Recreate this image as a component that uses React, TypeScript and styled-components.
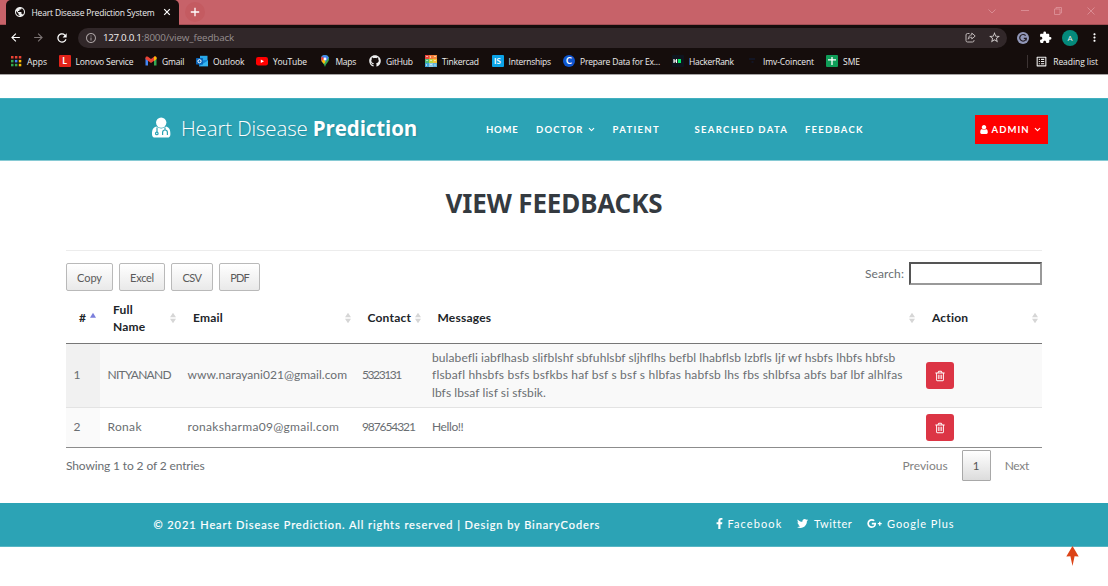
import React from 'react';
import styled, { createGlobalStyle } from 'styled-components';
import { MdPublic, MdInfoOutline, MdStarBorder, MdExtension, MdMoreVert, MdRefresh, MdArrowBack, MdArrowForward, MdOutlineListAlt } from 'react-icons/md';
import { FaGithub, FaFacebookF, FaTwitter, FaGooglePlusG } from 'react-icons/fa';
import { ChevronDown } from 'lucide-react';

const teal = '#2ca3b5';
const uiFont = '"Open Sans", "Noto Sans", sans-serif';
const bodyFont = 'Lato, "Open Sans", sans-serif';

const GlobalStyle = createGlobalStyle`
  * { box-sizing: border-box; }
  body { margin: 0; background: #fff; font-family: ${bodyFont}; overflow: hidden; }
  svg { display: block; flex: none; }
`;

/* letter-spaced run of text */
const Run = styled.span<{ $ls?: number }>`
  letter-spacing: ${(p) => p.$ls ?? 0}px;
  white-space: nowrap;
`;

/* ---------- browser window ---------- */
const Browser = styled.div`
  height: 75px;
  background: #150d0c;
  border-bottom: 1px solid #a5a3a3;
  font-family: ${uiFont};
  color: #eee;
`;
const TabStrip = styled.div`
  display: flex;
  height: 25px;
  padding-left: 6px;
  background: #c76269;
  border-bottom: 1px solid #a34e54;
`;
const Tab = styled.div`
  display: flex;
  align-items: center;
  width: 173px;
  height: 25px;
  padding: 0 8px 1px 8px;
  border-radius: 5px 5px 0 0;
  background: #150d0c;
  font-size: 8.5px;
  color: #eee;
`;
const TabTitle = styled.span`
  flex: 1;
  margin-left: 5.5px;
  letter-spacing: -0.18px;
  white-space: nowrap;
`;
const NewTab = styled.div`
  display: flex;
  align-items: center;
  justify-content: center;
  width: 20px;
  height: 20px;
  margin: 2px 0 0 6px;
  border-radius: 50%;
  background: #c45b61;
`;
const WindowControls = styled.div`
  display: flex;
  gap: 23px;
  margin: 6px 12px 0 auto;
`;
const AddressRow = styled.div`
  display: flex;
  align-items: center;
  height: 26px;
  padding: 0 10px 1px 9px;
`;
const NavButtons = styled.div`
  display: flex;
  flex: none;
  align-items: center;
  gap: 10px;
  width: 69px;
`;
const Address = styled.div`
  display: flex;
  flex: none;
  align-items: center;
  width: 929px;
  height: 20px;
  padding: 0 6px 0 7px;
  border-radius: 10px;
  background: #312729;
  font-size: 9.8px;
`;
const Host = styled.span`
  margin-left: 6px;
  letter-spacing: -0.32px;
  color: #f1eeee;
`;
const Path = styled.span`
  flex: 1;
  letter-spacing: -0.12px;
  color: #968f90;
`;
const AddressActions = styled.div`
  display: flex;
  align-items: center;
  gap: 12px;
  color: #cfcaca;
`;
const Extensions = styled.div`
  display: flex;
  align-items: center;
  gap: 10px;
  margin-left: 10px;
`;
const Avatar = styled.div`
  width: 16px;
  height: 16px;
  border-radius: 50%;
  background: #04897b;
  font-size: 8px;
  line-height: 16px;
  text-align: center;
`;
const Bookmarks = styled.div`
  display: flex;
  align-items: center;
  height: 20px;
  padding: 0 10px 0 10px;
  font-size: 8.5px;
  white-space: nowrap;
`;
const Bookmark = styled.div<{ $width: number; $ls: number }>`
  display: flex;
  flex: none;
  align-items: center;
  gap: 5px;
  width: ${(p) => p.$width}px;
  letter-spacing: ${(p) => p.$ls}px;
`;
const ReadingList = styled.div`
  display: flex;
  align-items: center;
  gap: 5px;
  margin-left: auto;
  padding-left: 7px;
  border-left: 1px solid #3d3434;
  letter-spacing: -0.06px;
`;

/* ---------- page header ---------- */
const Header = styled.header`
  display: flex;
  align-items: center;
  height: 63px;
  margin-top: 23px;
  padding-left: 151px;
  border-top: 1px solid #40b0bf;
  border-bottom: 1px solid #86cad4;
  background: ${teal};
  color: #fff;
`;
const Brand = styled.div`
  display: flex;
  flex: none;
  align-items: center;
  gap: 10px;
  width: 335px;
  padding-bottom: 3px;
  font: 300 20.5px/28px ${uiFont};
  letter-spacing: -0.15px;
  text-shadow: 1px 1px 2px rgba(0, 0, 0, 0.16);
  white-space: pre;
  b { font-weight: 700; letter-spacing: -0.1px; }
`;
const NavItem = styled.a<{ $width: number; $ls: number }>`
  display: flex;
  align-items: center;
  gap: 3px;
  flex: none;
  width: ${(p) => p.$width}px;
  font-size: 9.5px;
  font-weight: 700;
  letter-spacing: ${(p) => p.$ls}px;
  white-space: nowrap;
`;
const AdminButton = styled.div`
  display: flex;
  align-items: center;
  width: 73px;
  height: 29px;
  margin-left: -0.5px;
  padding: 0 6px 0 5px;
  background: #f00;
  font-size: 9.5px;
  font-weight: 700;
  letter-spacing: 1.05px;
  span { margin: 0 3px 0 4px; }
`;

/* ---------- content ---------- */
const Content = styled.main`
  width: 976px;
  height: 342px;
  margin: 0 66px;
  color: #6a6e72;
`;
const Title = styled.h1`
  height: 90px;
  margin: 0;
  padding-top: 23px;
  border-bottom: 1px solid #ececec;
  font: 700 26px/38px "Noto Sans", sans-serif;
  letter-spacing: -0.14px;
  text-align: center;
  color: #343a40;
`;
const Tools = styled.div`
  display: flex;
  align-items: flex-start;
  gap: 6px;
  height: 40px;
  padding-top: 12px;
`;
const ToolButton = styled.button<{ $width: number; $ls: number }>`
  width: ${(p) => p.$width}px;
  height: 28px;
  padding: 0;
  border: 1px solid #b9b9b9;
  border-radius: 2px;
  background: linear-gradient(#fff, #e9e9e9);
  font: 11px ${bodyFont};
  letter-spacing: ${(p) => p.$ls}px;
  color: #5a5a5a;
`;
const Search = styled.label`
  display: flex;
  align-items: center;
  gap: 5px;
  margin: -1px 0 0 auto;
  font-size: 12px;
  letter-spacing: 0.1px;
`;
const SearchInput = styled.input`
  width: 133px;
  height: 23px;
  border: 2px solid;
  border-color: #555 #999 #999 #555;
  background: #fff;
`;
const Table = styled.table`
  width: 976px;
  table-layout: fixed;
  border-collapse: separate;
  border-spacing: 0;
  border-bottom: 1px solid #8c8c8c;
  font-size: 12px;
  line-height: 17.3px;
`;
const HeadCell = styled.th<{ $width: number }>`
  width: ${(p) => p.$width}px;
  height: 53px;
  padding: 2px 4px 0 13px;
  border-bottom: 1px solid #777;
  text-align: left;
  color: #212529;
  font-weight: 700;
  letter-spacing: 0.2px;
`;
const HeadInner = styled.div`
  display: flex;
  align-items: center;
  justify-content: space-between;
`;
const Row = styled.tr<{ $odd?: boolean; $height: number }>`
  height: ${(p) => p.$height}px;
  background: ${(p) => (p.$odd ? '#f9f9f9' : '#fff')};
  td:first-child { background: ${(p) => (p.$odd ? '#f1f1f1' : '#fafafa')}; }
  td { border-bottom: ${(p) => (p.$odd ? '1px solid #e3e3e3' : '0')}; }
`;
const Cell = styled.td`
  padding: 0 0 1px 7.5px;
  vertical-align: middle;
`;
const ActionCell = styled(Cell)`
  padding: 0 0 0 7px;
`;
const Line = styled.div<{ $ls: number }>`
  letter-spacing: ${(p) => p.$ls}px;
  white-space: nowrap;
`;
const DeleteButton = styled.button`
  display: flex;
  align-items: center;
  justify-content: center;
  width: 28px;
  height: 27px;
  padding: 0;
  border: 0;
  border-radius: 3px;
  background: #dc3545;
`;
const TableFooter = styled.div`
  display: flex;
  align-items: center;
  height: 35px;
  padding-right: 13px;
  font-size: 12px;
`;
const Pager = styled.div`
  display: flex;
  align-items: center;
  gap: 14px;
  margin-left: auto;
  color: #828282;
`;
const PageNumber = styled.div`
  width: 29px;
  height: 31px;
  border: 1px solid #a8a8a8;
  border-radius: 1px;
  background: linear-gradient(#fff, #dcdcdc);
  font-size: 11.5px;
  line-height: 29px;
  text-align: center;
  color: #555;
`;

/* ---------- footer ---------- */
const Footer = styled.footer`
  display: flex;
  align-items: center;
  height: 44px;
  padding: 0 0 2px 153.5px;
  border-bottom: 1px solid #58b6c4;
  background: ${teal};
  color: #fff;
  font-size: 11px;
`;
const Copyright = styled.div`
  width: 560.5px;
  padding-top: 2px;
  letter-spacing: 0.92px;
  -webkit-text-stroke: 0.2px #fff;
`;
const Social = styled.a<{ $width: number; $ls: number; $gap: number }>`
  display: flex;
  align-items: center;
  gap: ${(p) => p.$gap}px;
  width: ${(p) => p.$width}px;
  letter-spacing: ${(p) => p.$ls}px;
  white-space: nowrap;
`;
const ToTop = styled.div`
  display: flex;
  justify-content: flex-end;
  margin-top: -1px;
  padding-right: 29px;
`;

/* ---------- drawings ---------- */
const SortIcon = ({ asc }: { asc?: boolean }) => (
  <svg width="6" height="12" viewBox="0 0 6 12">
    {asc ? <path d="M3 0.8 6 5.8H0z" fill="#7b7fdc" /> : <path d="M3 0.8 6 5.2H0zM0 6.8h6L3 11.2z" fill="#d6d6d6" />}
  </svg>
);
const TrashIcon = () => (
  <svg width="12" height="12" viewBox="0 0 1792 1792" fill="#fff">
    <path d="M704 736v576q0 14-9 23t-23 9h-64q-14 0-23-9t-9-23v-576q0-14 9-23t23-9h64q14 0 23 9t9 23zm256 0v576q0 14-9 23t-23 9h-64q-14 0-23-9t-9-23v-576q0-14 9-23t23-9h64q14 0 23 9t9 23zm256 0v576q0 14-9 23t-23 9h-64q-14 0-23-9t-9-23v-576q0-14 9-23t23-9h64q14 0 23 9t9 23zm128 724v-948h-896v948q0 22 7 40.5t14.5 27 10.5 8.5h832q3 0 10.5-8.5t14.5-27 7-40.5zm-672-1076h448l-48-117q-7-9-17-11h-317q-10 2-17 11zm928 32v64q0 14-9 23t-23 9h-96v948q0 83-47 143.5t-113 60.5h-832q-66 0-113-58.5t-47-141.5v-952h-96q-14 0-23-9t-9-23v-64q0-14 9-23t23-9h309l70-167q15-37 54-63t79-26h320q40 0 79 26t54 63l70 167h309q14 0 23 9t9 23z" />
  </svg>
);
const UserIcon = () => (
  <svg width="8" height="9" viewBox="256 128 1280 1536" fill="#fff">
    <path d="M1536 1399q0 109-62.5 187t-150.5 78h-854q-88 0-150.5-78t-62.5-187q0-85 8.5-160.5t31.5-152 58.5-131 94-89 134.5-34.5q131 128 313 128t313-128q76 0 134.5 34.5t94 89 58.5 131 31.5 152 8.5 160.5zm-256-887q0 159-112.5 271.5t-271.5 112.5-271.5-112.5-112.5-271.5 112.5-271.5 271.5-112.5 271.5 112.5 112.5 271.5z" />
  </svg>
);
const DoctorIcon = () => (
  <svg width="20" height="22" viewBox="0 0 20 22">
    <path d="M5.3 9.6C2 10.4 1 13 1 17.2 1 19.4 2.2 20.6 4 20.600h12.400c1.800 0 3-1.200 3-3.400 0-4.200-1-6.800-4.300-7.600-3 2.400-6.800 2.400-9.800 0z" fill="#fff" />
    <circle cx="10.200" cy="5.600" r="5.200" fill="#fff" />
    <g fill="none" stroke={teal} strokeWidth="1.200">
      <path d="M6 10.500v4.500M14 10.500v2.500M11.600 18v-2.600a2.400 2.400 0 0 1 4.800 0V18" />
      <circle cx="5.800" cy="16.400" r="1.300" />
    </g>
  </svg>
);
const ShareIcon = () => (
  <svg width="11" height="11" viewBox="0 0 11 11" fill="none" stroke="#bdb6b6" strokeWidth="1">
    <path d="M4.500 1.500H2.500A1.500 1.500 0 0 0 1 3v5.500A1.500 1.500 0 0 0 2.500 10h5A1.500 1.500 0 0 0 9 8.500V8M6.800 1l3.400 3-3.400 3V5.200C5 5.200 4 5.800 3.200 7.200 3.400 4.800 4.600 3 6.800 2.800z" />
  </svg>
);
const GrammarIcon = () => (
  <svg width="12" height="12" viewBox="0 0 12 12">
    <circle cx="6" cy="6" r="6" fill="#9197b8" />
    <path d="M8.600 3.700A3.300 3.300 0 1 0 9.300 6.400H6.800M9.200 6.400v2" fill="none" stroke="#221b22" strokeWidth="1.200" />
  </svg>
);

const AppsMark = () => (
  <svg width="12" height="12" viewBox="0 0 12 12">
    {['#ea4335', '#ea4335', '#ea4335', '#34a853', '#4285f4', '#fbbc05', '#34a853', '#34a853', '#fbbc05'].map((c, i) => (
      <rect key={i} x={1 + (i % 3) * 3.9} y={1 + Math.floor(i / 3) * 3.9} width="2.500" height="2.500" fill={c} />
    ))}
  </svg>
);
const LetterMark = styled.span<{ $bg: string; $round?: boolean; $size?: number }>`
  flex: none;
  width: 12px;
  height: 12px;
  border-radius: ${(p) => (p.$round ? '50%' : '1px')};
  background: ${(p) => p.$bg};
  color: #fff;
  font: 700 ${(p) => p.$size ?? 9}px/12px ${bodyFont};
  letter-spacing: 0;
  text-align: center;
`;
const GmailMark = () => (
  <svg width="12" height="12" viewBox="0 0 12 12">
    <path d="M.5 3v7.500h2.500V5z" fill="#4285f4" />
    <path d="M11.500 3v7.500H9V5z" fill="#34a853" />
    <path d="M.5 2.800C.5 1.500 2 1 3 1.800L6 4l3-2.200c1-.8 2.500-.3 2.500 1V4L6 8 .5 4z" fill="#ea4335" />
    <path d="M9 1.800c1-.8 2.500-.3 2.500 1V4L9 5.900z" fill="#fbbc04" />
  </svg>
);
const OutlookMark = () => (
  <svg width="12" height="12" viewBox="0 0 12 12">
    <path d="M4 .8h7.500v6H4z" fill="#28a8ea" />
    <path d="M3 5.500 12 5v6.200H3z" fill="#1180d4" />
    <path d="m3 11.200 9-5.700v5.700z" fill="#35b4f0" />
    <rect y="3" width="7" height="6.500" rx=".6" fill="#0a64b8" />
    <circle cx="3.500" cy="6.200" r="1.600" fill="none" stroke="#fff" />
  </svg>
);
const YouTubeMark = () => (
  <svg width="12" height="12" viewBox="0 0 12 12">
    <rect y="2" width="12" height="8.400" rx="2.200" fill="#f00" />
    <path d="M4.800 4.400 8 6.200 4.800 8z" fill="#fff" />
  </svg>
);
const MapsMark = () => (
  <svg width="12" height="12" viewBox="0 0 12 12">
    <path d="M6 0a4 4 0 0 1 4 4c0 3-3 4-4 8-1-4-4-5-4-8a4 4 0 0 1 4-4z" fill="#34a853" />
    <path d="M6 0a4 4 0 0 1 3.800 2.700L5 8.600C3.700 7 2 6 2 4a4 4 0 0 1 4-4z" fill="#4285f4" />
    <path d="M2.900 1.500 6 4 2.800 6.500C2 5.400 1.700 3 2.900 1.500z" fill="#ea4335" />
    <path d="M2.700 6.300 4.800 4 6.500 6.800 5 8.900z" fill="#fbbc04" />
    <circle cx="6" cy="4" r="1.400" fill="#fff" />
  </svg>
);
const TinkercadMark = () => (
  <svg width="12" height="12" viewBox="0 0 12 12">
    {['#e8453c', '#f3793b', '#f08a3c', '#4cb97a', '#b8d544', '#f5c33b', '#3fa4d8', '#8cc9e8', '#5fb2dc'].map((c, i) => (
      <rect key={i} x={(i % 3) * 4} y={Math.floor(i / 3) * 4} width="4" height="4" fill={c} />
    ))}
    <path d="M1 1.500h2M5.500 1v2M9 1.500h2M1 5.500h2M5 5.500h2M9 5.500h2M1.500 9v2M5 9.500h2M9 10h2" stroke="#fff" strokeWidth=".8" opacity=".7" />
  </svg>
);
const HackerRankMark = () => (
  <svg width="12" height="12" viewBox="0 0 12 12">
    <rect width="12" height="12" rx="1" fill="#0e141e" />
    <path d="M2 4v4M4.500 4v4M2 6h2.500" stroke="#fff" strokeWidth="1.200" />
    <rect x="6" y="4" width="3" height="4" fill="#00ea64" />
  </svg>
);
const CoincentMark = () => (
  <svg width="12" height="12" viewBox="0 0 12 12"><path d="M3 4h6M5.500 7h2" stroke="#101e3c" /></svg>
);
const SheetMark = () => (
  <svg width="12" height="12" viewBox="0 0 12 12">
    <rect width="12" height="12" rx="1" fill="#0f9d58" />
    <path d="M6 2v8M2 4.800h8" stroke="#fff" strokeWidth="1.300" />
  </svg>
);

const bookmarks: { label: string; icon: React.ReactNode; width: number; ls: number }[] = [
  { label: 'Apps', icon: <AppsMark />, width: 48.5, ls: 0.05 },
  { label: 'Lonovo Service', icon: <LetterMark $bg="#e2231a">L</LetterMark>, width: 86.5, ls: -0.12 },
  { label: 'Gmail', icon: <GmailMark />, width: 51, ls: -0.14 },
  { label: 'Outlook', icon: <OutlookMark />, width: 60, ls: -0.03 },
  { label: 'YouTube', icon: <YouTubeMark />, width: 62.5, ls: -0.16 },
  { label: 'Maps', icon: <MapsMark />, width: 50.5, ls: -0.3 },
  { label: 'GitHub', icon: <FaGithub size={12} />, width: 56, ls: -0.21 },
  { label: 'Tinkercad', icon: <TinkercadMark />, width: 66.5, ls: -0.22 },
  { label: 'Internships', icon: <LetterMark $bg="#0ba3e8" $size={8}>IS</LetterMark>, width: 71.5, ls: -0.23 },
  { label: 'Prepare Data for Ex...', icon: <LetterMark $bg="#0f56d0" $round>C</LetterMark>, width: 109, ls: -0.19 },
  { label: 'HackerRank', icon: <HackerRankMark />, width: 74, ls: -0.27 },
  { label: 'Imv-Coincent', icon: <CoincentMark />, width: 80, ls: -0.1 },
  { label: 'SME', icon: <SheetMark />, width: 40, ls: -0.02 },
];

const BrowserChrome = () => (
  <Browser>
    <TabStrip>
      <Tab>
        <MdPublic size={12} />
        <TabTitle>Heart Disease Prediction System</TabTitle>
        <svg width="8" height="8" viewBox="0 0 8 8"><path d="m1.200 1.200 5.600 5.600m0-5.600L1.200 6.800" stroke="#fff" strokeWidth="1.200" /></svg>
      </Tab>
      <NewTab>
        <svg width="10" height="10" viewBox="0 0 10 10"><path d="M5 .8v8.400M.8 5h8.400" stroke="#fff" strokeWidth="1.300" /></svg>
      </NewTab>
      <WindowControls>
        {['M1.500 3.500 5 7l3.500-3.500', 'M1 4.500h8', 'M1.500 3h5.500v5.500H1.500zM3 3V1.500h5.500V7H7', 'm1.500 1.500 7 7m0-7-7 7'].map((d) => (
          <svg key={d} width="10" height="10" viewBox="0 0 10 10" fill="none" stroke="#dd9096" strokeWidth=".9"><path d={d} /></svg>
        ))}
      </WindowControls>
    </TabStrip>
    <AddressRow>
      <NavButtons>
        <MdArrowBack size={13} color="#fff" />
        <MdArrowForward size={13} color="#7e7676" />
        <MdRefresh size={14} color="#fff" />
      </NavButtons>
      <Address>
        <MdInfoOutline size={12} color="#a59d9e" />
        <Host>127.0.0.1</Host>
        <Path>:8000/view_feedback</Path>
        <AddressActions>
          <ShareIcon />
          <MdStarBorder size={13} />
        </AddressActions>
      </Address>
      <Extensions>
        <GrammarIcon />
        <MdExtension size={13} color="#fff" />
        <Avatar>A</Avatar>
        <MdMoreVert size={13} color="#fff" />
      </Extensions>
    </AddressRow>
    <Bookmarks>
      {bookmarks.map((b) => (
        <Bookmark key={b.label} $width={b.width} $ls={b.ls}>{b.icon}{b.label}</Bookmark>
      ))}
      <ReadingList><MdOutlineListAlt size={13} />Reading list</ReadingList>
    </Bookmarks>
  </Browser>
);

const columns = [
  { width: 34, lines: ['#'], asc: true },
  { width: 80, lines: ['Full', 'Name'] },
  { width: 174.5, lines: ['Email'] },
  { width: 70, lines: ['Contact'] },
  { width: 494.5, lines: ['Messages'] },
  { width: 123, lines: ['Action'] },
];

type Feedback = { no: string; name: [string, number]; email: [string, number]; contact: [string, number]; message: [string, number][]; height: number };
const feedback: Feedback[] = [
  {
    no: '1', name: ['NITYANAND', -0.74], email: ['www.narayani021@gmail.com', 0.02], contact: ['5323131', -1.4], height: 64,
    message: [
      ['bulabefli iabflhasb slifblshf sbfuhlsbf sljhflhs befbl lhabflsb lzbfls ljf wf hsbfs lhbfs hbfsb', 0.09],
      ['flsbafl hhsbfs bsfs bsfkbs haf bsf s bsf s hlbfas habfsb lhs fbs shlbfsa abfs baf lbf alhlfas', 0.19],
      ['lbfs lbsaf lisf si sfsbik.', 0.08],
    ],
  },
  { no: '2', name: ['Ronak', 0.33], email: ['ronaksharma09@gmail.com', 0.31], contact: ['987654321', -1.1], height: 39, message: [['Hello!!', -0.4]] },
];

export default function App() {
  return (
    <>
      <GlobalStyle />
      <BrowserChrome />
      <Header>
        <Brand><DoctorIcon /><span>Heart Disease <b>Prediction</b></span></Brand>
        <NavItem $width={50} $ls={0.8}>HOME</NavItem>
        <NavItem $width={76.5} $ls={1.2}>DOCTOR<ChevronDown size={9} strokeWidth={3} /></NavItem>
        <NavItem $width={82} $ls={1.3}>PATIENT</NavItem>
        <NavItem $width={110.5} $ls={1.33}>SEARCHED DATA</NavItem>
        <NavItem $width={170} $ls={1.24}>FEEDBACK</NavItem>
        <AdminButton><UserIcon /><span>ADMIN</span><ChevronDown size={9} strokeWidth={3} /></AdminButton>
      </Header>
      <Content>
        <Title>VIEW FEEDBACKS</Title>
        <Tools>
          <ToolButton $width={47} $ls={-0.06}>Copy</ToolButton>
          <ToolButton $width={46} $ls={-0.25}>Excel</ToolButton>
          <ToolButton $width={42} $ls={-0.6}>CSV</ToolButton>
          <ToolButton $width={41} $ls={-0.9}>PDF</ToolButton>
          <Search>Search:<SearchInput /></Search>
        </Tools>
        <Table>
          <thead>
            <tr>
              {columns.map((c) => (
                <HeadCell key={c.lines[0]} $width={c.width}>
                  <HeadInner>
                    <div>{c.lines.map((l) => <div key={l}>{l}</div>)}</div>
                    <SortIcon asc={c.asc} />
                  </HeadInner>
                </HeadCell>
              ))}
            </tr>
          </thead>
          <tbody>
            {feedback.map((f, i) => (
              <Row key={f.no} $odd={i === 0} $height={f.height}>
                <Cell>{f.no}</Cell>
                <Cell><Run $ls={f.name[1]}>{f.name[0]}</Run></Cell>
                <Cell><Run $ls={f.email[1]}>{f.email[0]}</Run></Cell>
                <Cell><Run $ls={f.contact[1]}>{f.contact[0]}</Run></Cell>
                <Cell>{f.message.map(([text, ls]) => <Line key={text} $ls={ls}>{text}</Line>)}</Cell>
                <ActionCell><DeleteButton><TrashIcon /></DeleteButton></ActionCell>
              </Row>
            ))}
          </tbody>
        </Table>
        <TableFooter>
          <Run $ls={-0.13}>Showing 1 to 2 of 2 entries</Run>
          <Pager>
            <span>Previous</span>
            <PageNumber>1</PageNumber>
            <Run $ls={-0.3}>Next</Run>
          </Pager>
        </TableFooter>
      </Content>
      <Footer>
        <Copyright>© 2021 Heart Disease Prediction. All rights reserved | Design by BinaryCoders</Copyright>
        <Social $width={83} $ls={1.1} $gap={2.5}><FaFacebookF size={11} />Facebook</Social>
        <Social $width={70} $ls={0.56} $gap={6}><FaTwitter size={11} />Twitter</Social>
        <Social $width={100} $ls={0.91} $gap={5}><FaGooglePlusG size={15} />Google Plus</Social>
      </Footer>
      <ToTop>
        <svg width="13" height="20" viewBox="0 0 13 20"><path d="M6.500 0 12.700 10.500 8.600 10.200 6.500 20 4.400 10.200.3 10.500z" fill="#dc4417" /></svg>
      </ToTop>
    </>
  );
}
